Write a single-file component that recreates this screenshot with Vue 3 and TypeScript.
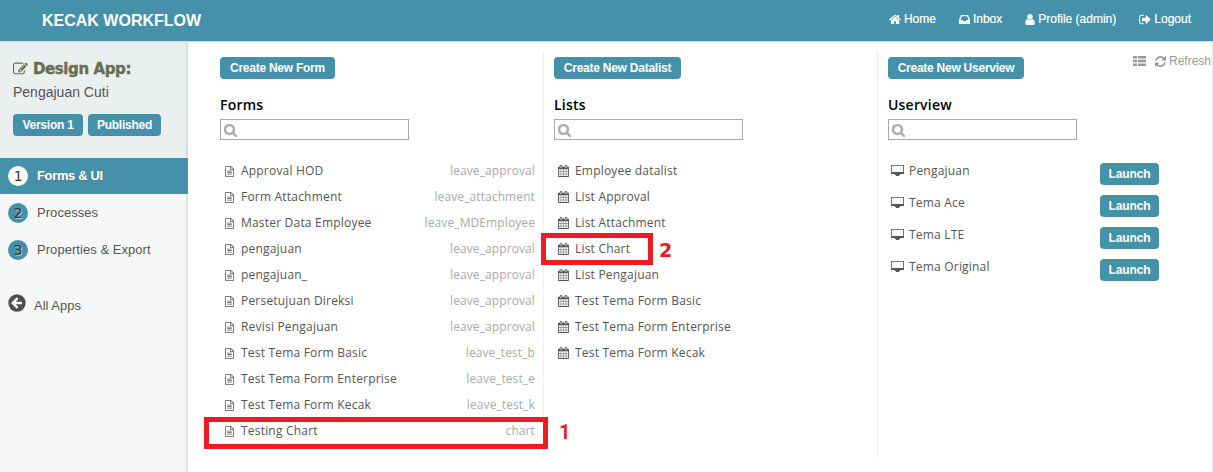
<script setup lang="ts">
interface FormEntry { name: string; table: string }
interface Shape { box: string; d: string }

const icons: Record<string, Shape> = {
  home: { box: '64 0 1664 1792', d: 'M1472 992v480q0 26-19 45t-45 19h-384v-384h-256v384h-384q-26 0-45-19t-19-45v-480q0-1 .5-3t.5-3l575-474 575 474q1 2 1 6zm223-69l-62 74q-8 9-21 11h-3q-13 0-21-7l-692-577-692 577q-12 8-24 7-13-2-21-11l-62-74q-8-10-7-23.5t11-21.5l719-599q32-26 76-26t76 26l244 204v-195q0-14 9-23t23-9h192q14 0 23 9t9 23v408l219 182q10 8 11 21.5t-7 23.5z' },
  inbox: { box: '128 0 1536 1792', d: 'M1151 960h316q-1-3-2.5-8.5t-2.5-7.5l-212-496h-708l-212 496q-1 3-2.5 8.5t-2.5 7.5h316l95 192h320zm513 30v482q0 26-19 45t-45 19h-1408q-26 0-45-19t-19-45v-482q0-62 25-123l238-552q10-25 36.5-42t52.5-17h832q26 0 52.5 17t36.5 42l238 552q25 61 25 123z' },
  user: { box: '256 0 1280 1792', d: 'M1536 1399q0 109-62.5 187t-150.5 78h-854q-88 0-150.5-78t-62.5-187q0-85 8.5-160.5t31.5-152 58.5-131 94-89 134.5-34.5q131 128 313 128t313-128q76 0 134.5 34.5t94 89 58.5 131 31.5 152 8.5 160.5zm-256-887q0 159-112.5 271.5t-271.5 112.5-271.5-112.5-112.5-271.5 112.5-271.5 271.5-112.5 271.5 112.5 112.5 271.5z' },
  logout: { box: '64 0 1600 1792', d: 'M704 1440q0 4 1 20t.5 26.5-3 23.5-10 19.5-20.5 6.5h-320q-119 0-203.5-84.5t-84.5-203.5v-704q0-119 84.5-203.5t203.5-84.5h320q13 0 22.5 9.5t9.5 22.5q0 4 1 20t.5 26.5-3 23.5-10 19.5-20.5 6.5h-320q-66 0-113 47t-47 113v704q0 66 47 113t113 47h312l11.5 1 11.5 3 8 5.5 7 9 2 13.5zm928-544q0 26-19 45l-544 544q-19 19-45 19t-45-19-19-45v-288h-448q-26 0-45-19t-19-45v-384q0-26 19-45t45-19h448v-288q0-26 19-45t45-19 45 19l544 544q19 19 19 45z' },
  edit: { box: '0 0 1792 1792', d: 'M888 1184l116-116-152-152-116 116v56h96v96h56zm440-720q-16-16-33 1l-350 350q-17 17-1 33t33-1l350-350q17-17 1-33zm80 594v190q0 119-84.5 203.5t-203.5 84.5h-832q-119 0-203.5-84.5t-84.5-203.5v-832q0-119 84.5-203.5t203.5-84.5h832q63 0 117 25 15 7 18 23 3 17-9 29l-49 49q-14 14-32 8-23-6-45-6h-832q-66 0-113 47t-47 113v832q0 66 47 113t113 47h832q66 0 113-47t47-113v-126q0-13 9-22l64-64q15-15 35-7t20 29zm-96-738l288 288-672 672h-288v-288zm444 132l-92 92-288-288 92-92q28-28 68-28t68 28l152 152q28 28 28 68t-28 68z' },
  search: { box: '64 128 1664 1664', d: 'M1216 832q0-185-131.5-316.5t-316.5-131.5-316.5 131.5-131.5 316.5 131.5 316.5 316.5 131.5 316.5-131.5 131.5-316.5zm512 832q0 52-38 90t-90 38q-54 0-90-38l-343-342q-179 124-399 124-143 0-273.5-55.5t-225-150-150-225-55.5-273.5 55.5-273.5 150-225 225-150 273.5-55.5 273.5 55.5 225 150 150 225 55.5 273.5q0 220-124 399l343 343q37 37 37 90z' },
  file: { box: '128 0 1536 1792', d: 'M1596 380q28 28 48 76t20 88v1152q0 40-28 68t-68 28h-1344q-40 0-68-28t-28-68v-1600q0-40 28-68t68-28h896q40 0 88 20t76 48zm-444-244v376h376q-10-29-22-41l-313-313q-12-12-41-22zm384 1528v-1024h-416q-40 0-68-28t-28-68v-416h-768v1536h1280zm-1024-864q0-14 9-23t23-9h704q14 0 23 9t9 23v64q0 14-9 23t-23 9h-704q-14 0-23-9t-9-23v-64zm736 224q14 0 23 9t9 23v64q0 14-9 23t-23 9h-704q-14 0-23-9t-9-23v-64q0-14 9-23t23-9h704zm0 256q14 0 23 9t9 23v64q0 14-9 23t-23 9h-704q-14 0-23-9t-9-23v-64q0-14 9-23t23-9h704z' },
  calendar: { box: '64 0 1664 1792', d: 'M192 1664h288v-288h-288v288zm352 0h320v-288h-320v288zm-352-352h288v-320h-288v320zm352 0h320v-320h-320v320zm-352-384h288v-288h-288v288zm736 736h320v-288h-320v288zm-384-736h320v-288h-320v288zm768 736h288v-288h-288v288zm-384-352h320v-320h-320v320zm-352-864v-288q0-13-9.5-22.5t-22.5-9.5h-64q-13 0-22.5 9.5t-9.5 22.5v288q0 13 9.5 22.5t22.5 9.5h64q13 0 22.5-9.5t9.5-22.5zm736 864h288v-320h-288v320zm-384-384h320v-288h-320v288zm384 0h288v-288h-288v288zm32-480v-288q0-13-9.5-22.5t-22.5-9.5h-64q-13 0-22.5 9.5t-9.5 22.5v288q0 13 9.5 22.5t22.5 9.5h64q13 0 22.5-9.5t9.5-22.5zm384-64v1280q0 52-38 90t-90 38h-1408q-52 0-90-38t-38-90v-1280q0-52 38-90t90-38h128v-96q0-66 47-113t113-47h64q66 0 113 47t47 113v96h384v-96q0-66 47-113t113-47h64q66 0 113 47t47 113v96h128q52 0 90 38t38 90z' },
  refresh: { box: '128 128 1536 1536', d: 'M1639 1056q0 5-1 7-64 268-268 434.5t-478 166.5q-146 0-282.5-55t-243.5-157l-129 129q-19 19-45 19t-45-19-19-45v-448q0-26 19-45t45-19h448q26 0 45 19t19 45-19 45l-137 137q71 66 161 102t187 36q134 0 250-65t186-179q11-17 53-117 8-23 30-23h192q13 0 22.5 9.5t9.5 22.5zm25-800v448q0 26-19 45t-45 19h-448q-26 0-45-19t-19-45 19-45l138-138q-148-137-349-137-134 0-250 65t-186 179q-11 17-53 117-8 23-30 23h-199q-13 0-22.5-9.5t-9.5-22.5v-7q65-268 270-434.5t480-166.5q146 0 284 55.5t245 156.5l130-129q19-19 45-19t45 19 19 45z' },
}

const nav = [
  { icon: 'home', label: 'Home' },
  { icon: 'inbox', label: 'Inbox' },
  { icon: 'user', label: 'Profile (admin)' },
  { icon: 'logout', label: 'Logout' },
]
const steps = ['Forms & UI', 'Processes', 'Properties & Export']
const forms: FormEntry[] = [
  { name: 'Approval HOD', table: 'leave_approval' },
  { name: 'Form Attachment', table: 'leave_attachment' },
  { name: 'Master Data Employee', table: 'leave_MDEmployee' },
  { name: 'pengajuan', table: 'leave_approval' },
  { name: 'pengajuan_', table: 'leave_approval' },
  { name: 'Persetujuan Direksi', table: 'leave_approval' },
  { name: 'Revisi Pengajuan', table: 'leave_approval' },
  { name: 'Test Tema Form Basic', table: 'leave_test_b' },
  { name: 'Test Tema Form Enterprise', table: 'leave_test_e' },
  { name: 'Test Tema Form Kecak', table: 'leave_test_k' },
  { name: 'Testing Chart', table: 'chart' },
]
const lists = ['Employee datalist', 'List Approval', 'List Attachment', 'List Chart', 'List Pengajuan', 'Test Tema Form Basic', 'Test Tema Form Enterprise', 'Test Tema Form Kecak']
const views = ['Pengajuan', 'Tema Ace', 'Tema LTE', 'Tema Original']
</script>

<template>
  <div class="page">
    <header class="top">
      <h1>KECAK WORKFLOW</h1>
      <nav>
        <a v-for="n in nav" :key="n.icon" :class="n.icon">
          <svg :viewBox="icons[n.icon].box"><path :d="icons[n.icon].d" /></svg>
          <span>{{ n.label }}</span>
        </a>
      </nav>
    </header>
    <div class="body">
      <aside>
        <section class="app">
          <h2><svg :viewBox="icons.edit.box"><path :d="icons.edit.d" /></svg><span>Design App:</span></h2>
          <p>Pengajuan Cuti</p>
          <div class="tags"><button class="btn version">Version 1</button><button class="btn published">Published</button></div>
        </section>
        <ul class="steps">
          <li v-for="(s, i) in steps" :key="s" :class="{ active: i === 0 }"><b>{{ i + 1 }}</b><span>{{ s }}</span></li>
        </ul>
        <a class="all">
          <svg viewBox="0 0 18 18"><circle cx="9" cy="9" r="8.7" fill="#4f4f4f" /><path d="M9.6 4.2 4.8 9l4.8 4.8M5 9h9" fill="none" stroke="#f6f8f8" stroke-width="2.5" /></svg>
          <span>All Apps</span>
        </a>
      </aside>
      <main>
        <section class="col forms">
          <button class="btn">Create New Form</button>
          <h3>Forms</h3>
          <div class="search"><svg :viewBox="icons.search.box"><path :d="icons.search.d" /></svg></div>
          <ul>
            <li v-for="(f, i) in forms" :key="i">
              <svg class="file" :viewBox="icons.file.box"><path :d="icons.file.d" /></svg>
              <span>{{ f.name }}</span><em>{{ f.table }}</em>
            </li>
          </ul>
        </section>
        <section class="col lists">
          <button class="btn">Create New Datalist</button>
          <h3>Lists</h3>
          <div class="search"><svg :viewBox="icons.search.box"><path :d="icons.search.d" /></svg></div>
          <ul>
            <li v-for="l in lists" :key="l">
              <svg class="cal" :viewBox="icons.calendar.box"><path :d="icons.calendar.d" /></svg>
              <span>{{ l }}</span>
            </li>
          </ul>
        </section>
        <section class="col views">
          <div class="tools">
            <button class="btn">Create New Userview</button>
            <div class="right">
              <svg class="grid" viewBox="0 0 13 10"><path d="M0 0h4v2.6H0zM5 0h8v2.6H5zM0 3.7h4v2.6H0zM5 3.7h8v2.6H5zM0 7.4h4V10H0zM5 7.4h8V10H5z" /></svg>
              <svg class="refresh" :viewBox="icons.refresh.box"><path :d="icons.refresh.d" /></svg>
              <span>Refresh</span>
            </div>
          </div>
          <h3>Userview</h3>
          <div class="search"><svg :viewBox="icons.search.box"><path :d="icons.search.d" /></svg></div>
          <ul>
            <li v-for="v in views" :key="v">
              <svg class="desk" viewBox="0 0 13 11"><path fill-rule="evenodd" d="M0 0h13v9H0zM.8.7v6.3h11.4V.7zM4 9h5v1H8v1H5v-1H4z" /></svg>
              <span>{{ v }}</span><button class="btn">Launch</button>
            </li>
          </ul>
        </section>
      </main>
    </div>
    <div class="mark one"></div><strong class="num n1">1</strong>
    <div class="mark two"></div><strong class="num n2">2</strong>
  </div>
</template>

<style>
body { margin: 0; background: #fff; overflow: hidden; }
</style>
<style scoped>
* { box-sizing: border-box; }
.page { position: relative; width: 1213px; height: 472px; overflow: hidden; background: #fff; font: 12px "Liberation Sans", sans-serif; color: #555; }
h1, h2, h3, p, ul { margin: 0; padding: 0; font-weight: normal; }
li { list-style: none; }
svg { display: block; flex: none; fill: currentColor; }
span, em { white-space: nowrap; }
.top { display: flex; height: 42px; background: #4591a9; border-bottom: 1px solid #d5dcdf; color: #fff; padding-left: 42px; }
h1 { font-size: 16px; font-weight: bold; line-height: 41px; flex: 1; }
nav { display: flex; height: 38px; padding-right: 22px; }
nav a { display: flex; align-items: center; gap: 3px; -webkit-text-stroke: 0.2px #fff; }
nav a + a { margin-left: 23px; }
nav svg { width: 12px; height: 13px; }
nav .inbox svg { width: 11px; }
nav .user svg { width: 10px; }
.body { display: flex; height: 430px; }
aside { width: 188px; background: #f6f8f8; box-shadow: inset -2px 0 1px #e2e5e5; }
.app { height: 116px; background: #ebeff0; padding: 17px 0 0 13px; box-shadow: inset -2px 0 1px #d8dcdd; }
h2 { display: flex; align-items: center; height: 20px; color: #686e53; font: bold 15px "DejaVu Sans", sans-serif; letter-spacing: -.4px; -webkit-text-stroke: .4px #686e53; }
h2 svg { width: 15px; height: 16px; margin-right: 5px; }
p { font-size: 14px; line-height: 18px; margin-top: 4px; }
.tags { display: flex; gap: 5px; margin-top: 13px; }
.btn { display: block; height: 22px; border: 0; border-radius: 4px; padding: 0; background: #4591a9; color: #fff; font: bold 12px/21px "Liberation Sans", sans-serif; letter-spacing: -.25px; text-align: center; white-space: nowrap; flex: none; }
.version { width: 70px; }
.published { width: 73px; }
.steps li { display: flex; align-items: center; height: 37px; padding-left: 8px; font-size: 13px; letter-spacing: .05px; }
.steps .active { height: 36px; background: #4591a9; color: #fff; font-weight: bold; letter-spacing: -.35px; text-shadow: 1px 1px 1px #777; margin-bottom: 0; }
.steps li span { padding-bottom: 1px; }
.steps b { width: 20px; height: 20px; border-radius: 50%; background: #4591a9; color: #333; text-shadow: 1px 1px 1px #ccc; font: 14px/20px "DejaVu Sans", sans-serif; text-align: center; margin-right: 9px; }
.steps .active b { background: #fff; text-shadow: none; }
.all { display: flex; height: 24px; padding-left: 8px; margin-top: 26px; font-size: 13px; }
.all svg { width: 18px; height: 18px; }
.all span { margin-left: 8px; line-height: 23px; }
main { display: flex; width: 1025px; height: 430px; border-right: 1px solid #eee; padding-top: 10px; }
.col { height: 406px; padding-top: 5px; }
.forms { width: 356px; padding-left: 32px; border-right: 1px solid #eee; }
.lists { width: 334px; padding-left: 10px; border-right: 1px solid #eee; }
.views { width: 334px; padding-left: 10px; }
.forms > .btn { width: 115px; }
.lists > .btn { width: 127px; }
.tools { display: flex; justify-content: space-between; height: 22px; }
.tools .btn { width: 136px; }
.right { display: flex; align-items: center; color: #999; height: 8px; padding-right: 1px; }
.grid { width: 13px; height: 10px; }
.refresh { width: 11px; height: 11px; margin: 0 3px 0 9px; }
h3 { color: #000; font: 600 14px/20px "Open Sans", sans-serif; margin-top: 16px; letter-spacing: .2px; }
.search { width: 189px; height: 21px; margin-top: 4px; border: 1px solid #aaa; padding: 4px 0 0 3px; color: #aaa; }
.search svg { width: 13px; height: 13px; stroke: currentColor; stroke-width: 50px; }
ul { font-family: "Open Sans", sans-serif; }
.steps { font-family: "Liberation Sans", sans-serif; }
.col ul { margin-top: 18px; letter-spacing: .2px; }
.col li { display: flex; align-items: center; height: 26px; }
.forms li { padding: 0 8px 0 5px; }
.forms li span, .forms li em, .lists li span { padding-bottom: 2px; }
.file { width: 9px; height: 11px; margin-right: 7px; }
em { margin-left: auto; font-style: normal; color: #aaa; letter-spacing: .1px; }
.lists li { padding-left: 4px; }
.cal { width: 11px; height: 12px; margin-right: 6px; }
.views li { height: 32px; padding-left: 3px; align-items: flex-start; }
.desk { width: 13px; height: 11px; margin: 7px 5px 0 0; }
.views li span { line-height: 26px; width: 191px; }
.views li .btn { width: 59px; margin-top: 5px; letter-spacing: -.1px; }
.mark { position: absolute; border: 5px solid #ed1c24; }
.one { left: 204px; top: 417px; width: 344px; height: 32px; }
.two { left: 541px; top: 233px; width: 112px; height: 32px; }
.num { position: absolute; color: #ed1c24; font: bold 20px/20px Roboto, sans-serif; }
.n1 { left: 559px; top: 422px; }
.n2 { left: 659px; top: 240px; font: bold 19px/20px "DejaVu Sans", sans-serif; }
</style>
